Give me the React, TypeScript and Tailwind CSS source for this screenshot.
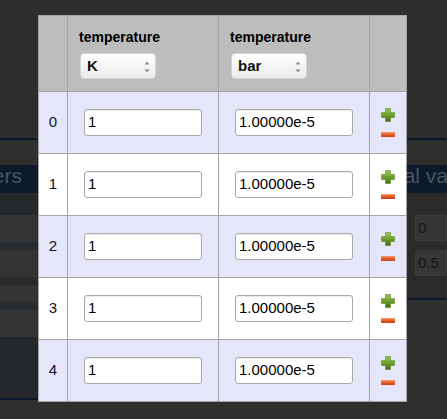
import React from "react";

function Plus() {
  return (
    <svg width="14" height="14" viewBox="0 0 14 14" className="block">
      <defs>
        <linearGradient id="pg" x1="0" y1="0" x2="0" y2="1">
          <stop offset="0" stopColor="#9cc95a" />
          <stop offset="0.5" stopColor="#6f9f2c" />
          <stop offset="1" stopColor="#3f6d12" />
        </linearGradient>
      </defs>
      <path d="M4.5 0.5 h5 v4 h4 v5 h-4 v4 h-5 v-4 h-4 v-5 h4 z" fill="url(#pg)" stroke="#5a8a22" strokeWidth="0.6" strokeLinejoin="round" />
    </svg>
  );
}

function Minus() {
  return (
    <svg width="14" height="5" viewBox="0 0 14 5" className="block">
      <defs>
        <linearGradient id="mg" x1="0" y1="0" x2="0" y2="1">
          <stop offset="0" stopColor="#f7a070" />
          <stop offset="0.45" stopColor="#e8602a" />
          <stop offset="1" stopColor="#c8400e" />
        </linearGradient>
      </defs>
      <rect x="0" y="0" width="14" height="5" fill="url(#mg)" />
    </svg>
  );
}

function Select({ label }: { label: string }) {
  return (
    <div className="relative flex h-[26px] w-[76px] items-center rounded-[4px] border border-[#d4d4d4] bg-gradient-to-b from-[#ffffff] to-[#ebebeb] pl-[6px] text-[15px] font-bold text-[#111111]">
      {label}
      <svg width="6" height="12" viewBox="0 0 6 12" className="absolute right-[5px] top-[7px]">
        <path d="M0.5 3.5 L3 0.5 L5.5 3.5 Z" fill="#8a8a8a" />
        <path d="M0.5 8.5 L3 11.5 L5.5 8.5 Z" fill="#8a8a8a" />
      </svg>
    </div>
  );
}

function HeaderCell({ unit }: { unit: string }) {
  return (
    <div className="flex w-[151px] flex-col border-r border-[#a4a4a4] pl-[11px] pt-[13px]">
      <div className="text-[14px] font-bold leading-[16px] text-black">temperature</div>
      <div className="mt-[8px] ml-[1px]">
        <Select label={unit} />
      </div>
    </div>
  );
}

function Input({ value }: { value: string }) {
  return (
    <div className="flex h-[27px] w-[118px] items-center rounded-[3px] border border-[#a9a9a9] bg-white pl-[3px] text-[15px] text-black shadow-[inset_0_1px_1px_rgba(0,0,0,0.08)]">
      {value}
    </div>
  );
}

function Row({ i }: { i: number }) {
  const bg = i % 2 === 0 ? "bg-[#e6e6fa]" : "bg-white";
  return (
    <div className={`flex h-[62px] border-b border-[#a4a4a4] ${bg}`}>
      <div className="flex w-[29px] items-center justify-center border-r border-[#a4a4a4] text-[15px] text-[#111122]">
        {i}
      </div>
      <div className="flex w-[151px] items-center justify-center border-r border-[#a4a4a4]">
        <Input value="1" />
      </div>
      <div className="flex w-[151px] items-center justify-center border-r border-[#a4a4a4]">
        <Input value="1.00000e-5" />
      </div>
      <div className="flex flex-1 flex-col items-center justify-center gap-[10px]">
        <Plus />
        <Minus />
      </div>
    </div>
  );
}

function BgInput({ value }: { value: string }) {
  return (
    <div className="ml-[8px] flex h-[26px] items-center border border-[#3c3c3c] bg-[#363636] pl-[2px] text-[15px] text-[#141414]">
      {value}
    </div>
  );
}

export default function App() {
  return (
    <div
      className="relative h-[419px] w-[447px] overflow-hidden bg-[#2f2f2f]"
      style={{ fontFamily: '"Liberation Sans", Arial, sans-serif' }}
    >
      {/* background page */}
      <div className="h-[138px] bg-[#2e2e2e]" />
      <div className="h-[2px] bg-[#0b1a2a]" />
      <div className="h-[25px] bg-[#2f2f2f]" />
      <div className="flex h-[28px] items-start bg-[#0c1a2a] text-[21px] leading-[22px] text-[#4b5561]">
        <div className="flex w-[22px] justify-end whitespace-nowrap">
          <span>Parameters</span>
        </div>
        <div className="ml-[349px] whitespace-nowrap">Initial values</div>
      </div>
      <div className="flex">
        <div className="flex w-[38px] flex-col">
          <div className="h-[22px] bg-[#26292b]" />
          <div className="h-[27px] bg-[#333333]" />
          <div className="h-[8px] bg-[#282b2d]" />
          <div className="h-[27px] bg-[#333333]" />
          <div className="h-[8px] bg-[#282b2d]" />
          <div className="h-[17px] bg-[#333333]" />
          <div className="h-[8px] bg-[#282b2d]" />
          <div className="h-[27px] bg-[#333333]" />
          <div className="h-[61px] bg-[#25282b]" />
          <div className="h-[2px] bg-[#0b1a2a]" />
        </div>
        <div className="flex-1" />
        <div className="flex w-[40px] flex-col">
          <div className="flex flex-col bg-[#2a2a2a] pt-[22px] pb-[22px]">
            <BgInput value="0" />
            <div className="h-[9px]" />
            <BgInput value="0.5" />
          </div>
          <div className="h-[2px] bg-[#0b1a2a]" />
        </div>
      </div>

      {/* dialog overlay */}
      <div className="absolute left-[38px] top-[15px] w-[369px] border-x border-t border-[#a4a4a4] bg-white">
        <div className="flex h-[76px] border-b border-[#a4a4a4] bg-[#bdbdbd]">
          <div className="w-[29px] border-r border-[#a4a4a4]" />
          <HeaderCell unit="K" />
          <HeaderCell unit="bar" />
          <div className="flex-1" />
        </div>
        {[0, 1, 2, 3, 4].map((i) => (
          <Row key={i} i={i} />
        ))}
      </div>
    </div>
  );
}
